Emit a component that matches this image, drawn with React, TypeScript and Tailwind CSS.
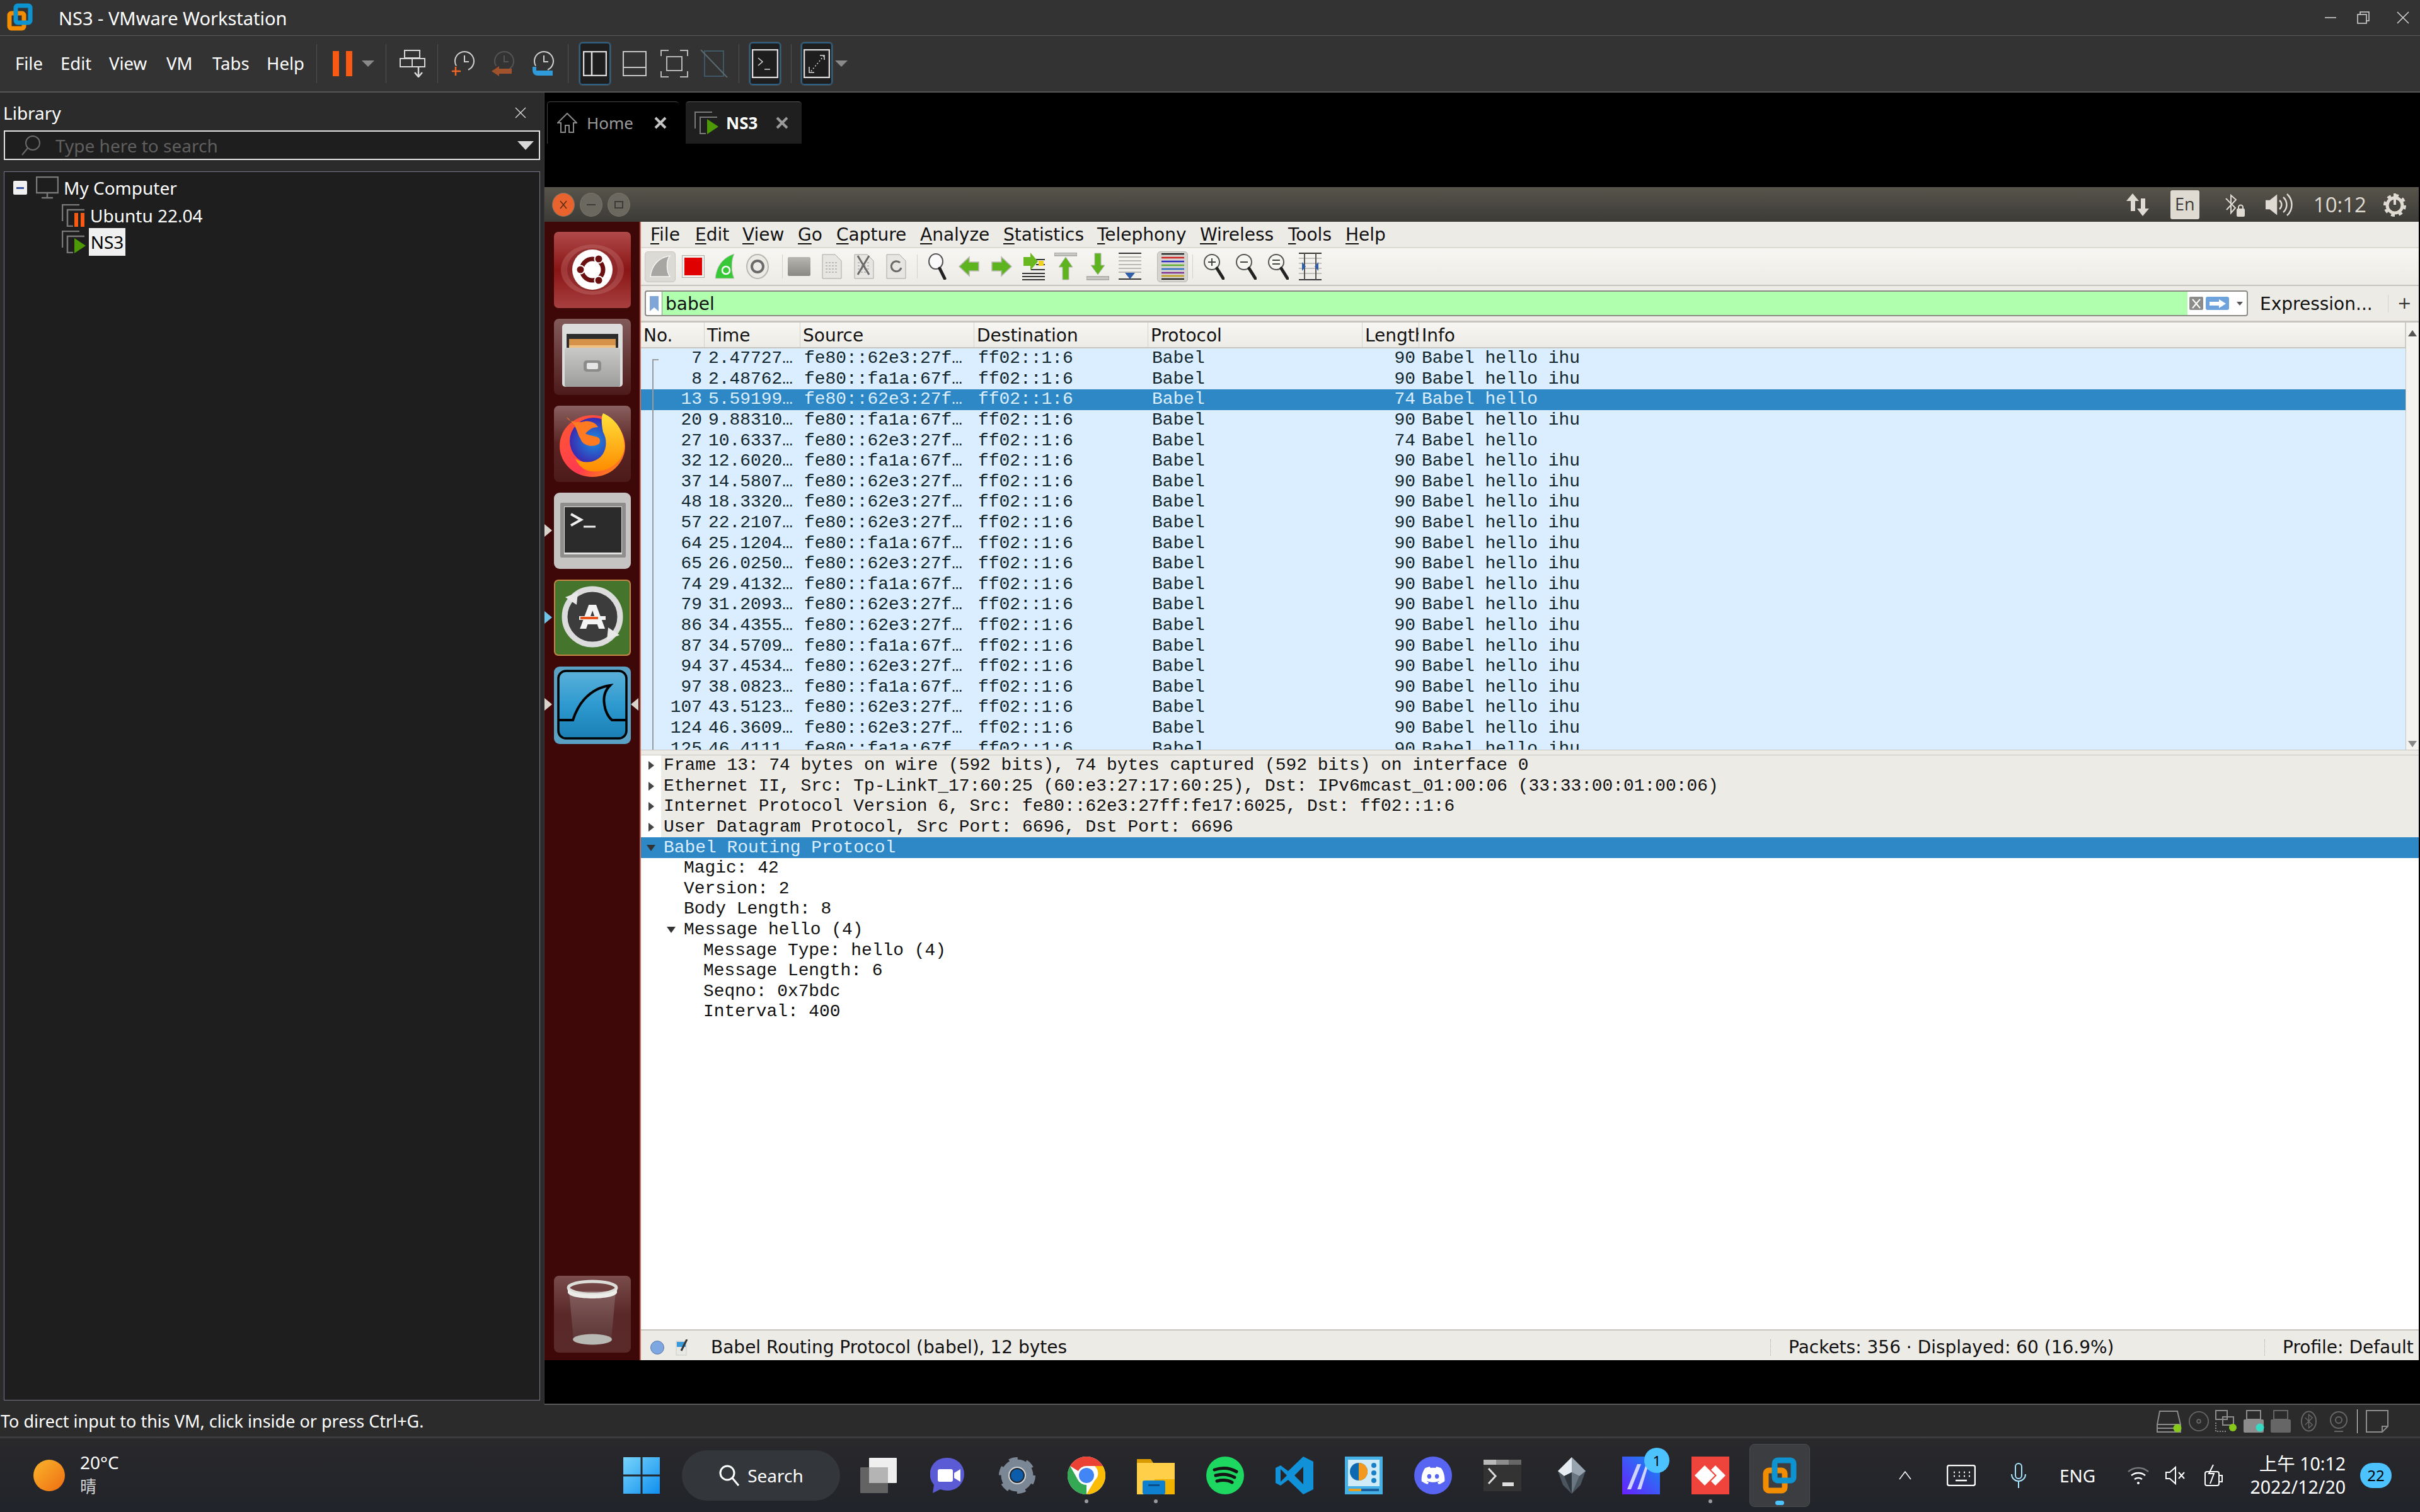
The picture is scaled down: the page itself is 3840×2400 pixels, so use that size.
import React from "react";
import { FaDiscord } from "react-icons/fa";

const G = "#8c8c8c";

function VMwareLogo({ s = 60 }: { s?: number }) {
  return (
    <svg width={s} height={s} viewBox="0 0 60 60" fill="none">
      <rect x="8" y="22" width="30" height="32" rx="5" stroke="#f28c00" strokeWidth="9" />
      <rect x="22" y="6" width="30" height="32" rx="5" stroke="#0d93cf" strokeWidth="9" />
    </svg>
  );
}

function Clock({ badge }: { badge: "plus" | "back" | "wrench" }) {
  return (
    <svg width="46" height="42" viewBox="0 0 46 42" fill="none">
      <circle cx="22" cy="17" r="15" stroke={badge === "back" ? "#555" : "#d0d0d0"} strokeWidth="2" strokeDasharray={badge === "back" ? "70 30" : "72 24"} transform="rotate(150 22 17)" />
      <path d="M22 8v10h7" stroke={badge === "back" ? "#555" : "#d0d0d0"} strokeWidth="2" />
      {badge === "plus" && <path d="M8 26v14M2 33h14" stroke="#f26522" strokeWidth="2.5" />}
      {badge === "back" && <path d="M2 33l12-8v4h20v8H14v4z" fill="#a0522d" />}
      {badge === "wrench" && <path d="M4 26h6v6h26v8H12a8 8 0 0 1-8-8z" fill="#2f9bdb" />}
    </svg>
  );
}

function ActiveBtn({ children }: { children: React.ReactNode }) {
  return (
    <div className="w-[50px] h-[68px] rounded-[5px] bg-[#1e1e1e] border-2 border-[#2a6189] outline outline-1 outline-[#4a4a4a] flex items-center justify-center">
      {children}
    </div>
  );
}

function Sep({ cls = "" }: { cls?: string }) {
  return <div className={`w-px h-[62px] bg-[#505050] shrink-0 ${cls}`} />;
}

function Caret({ cls = "" }: { cls?: string }) {
  return (
    <svg className={`shrink-0 ${cls}`} width="20" height="10" viewBox="0 0 20 10">
      <path d="M0 0h20L10 10z" fill="#8a8a8a" />
    </svg>
  );
}

function TitleBar() {
  return (
    <div className="h-[57px] shrink-0 flex items-center border-b border-[#5a5a5a] bg-[#333333] text-white">
      <div className="ml-[10px] mt-[-2px]">
        <svg width="44" height="44" viewBox="0 0 44 44" fill="none">
          <rect x="5" y="16" width="23" height="24" rx="3" stroke="#f28c00" strokeWidth="7" />
          <rect x="15" y="4" width="23" height="27" rx="3" stroke="#0d93cf" strokeWidth="7" />
        </svg>
      </div>
      <div className="ml-[39px] text-[29px] pt-[2px] font-['Noto_Sans',sans-serif]">NS3 - VMware Workstation</div>
      <div className="ml-auto flex items-center">
        <svg width="24" height="24" viewBox="0 0 24 24" className="mr-[27px]"><path d="M2 12h18" stroke="#d8d8d8" strokeWidth="1.5" /></svg>
        <svg width="24" height="24" viewBox="0 0 24 24" fill="none" stroke="#d8d8d8" strokeWidth="1.5" className="mr-[39px]"><rect x="3" y="7" width="14" height="14" /><path d="M7 7V3h14v14h-4" /></svg>
        <svg width="24" height="24" viewBox="0 0 24 24" stroke="#d8d8d8" strokeWidth="1.5" className="mr-[15px]"><path d="M3 3l18 18M21 3L3 21" /></svg>
      </div>
    </div>
  );
}

function VMToolbar() {
  return (
    <div className="h-[90px] shrink-0 flex items-center bg-[#333333] border-b-2 border-[#555555] text-white font-['Noto_Sans',sans-serif]">
      <div className="w-[502px] shrink-0 flex items-center text-[27.5px] pl-[24px]">
        <span className="w-[72px]">File</span>
        <span className="w-[77px]">Edit</span>
        <span className="w-[91px]">View</span>
        <span className="w-[73px]">VM</span>
        <span className="w-[86px]">Tabs</span>
        <span>Help</span>
      </div>
      <Sep />
      <div className="ml-[25px] flex gap-[11px]">
        <div className="w-[10px] h-[40px] bg-[#f95a13]" />
        <div className="w-[10px] h-[40px] bg-[#f95a13]" />
      </div>
      <Caret cls="ml-[15px]" />
      <Sep cls="ml-[18px]" />
      <svg className="ml-[21px]" width="42" height="44" viewBox="0 0 42 44" fill="none" stroke="#d8d8d8" strokeWidth="2">
        <rect x="8" y="1" width="24" height="12" />
        <rect x="1" y="14" width="19" height="13" />
        <rect x="20" y="14" width="20" height="13" />
        <path d="M30 27v15M24 36l6 7 6-7" strokeWidth="2.5" />
      </svg>
      <Sep cls="ml-[18px]" />
      <div className="ml-[20px]"><Clock badge="plus" /></div>
      <div className="ml-[17px]"><Clock badge="back" /></div>
      <div className="ml-[17px]"><Clock badge="wrench" /></div>
      <Sep cls="ml-[14px]" />
      <div className="ml-[17px]">
        <ActiveBtn>
          <svg width="38" height="40" viewBox="0 0 38 40" fill="none" stroke="#dcdcdc" strokeWidth="2.5"><rect x="1" y="1" width="36" height="38" /><path d="M14 1v38" /></svg>
        </ActiveBtn>
      </div>
      <svg className="ml-[19px]" width="38" height="40" viewBox="0 0 38 40" fill="none" stroke="#c8c8c8" strokeWidth="2"><rect x="1" y="1" width="36" height="38" /><path d="M1 26h36" /></svg>
      <svg className="ml-[22px]" width="44" height="44" viewBox="0 0 44 44" fill="none" stroke="#b8b8b8" strokeWidth="2"><path d="M1 10V1h12M31 1h12v9M43 34v9H31M13 43H1v-9" /><rect x="10" y="11" width="24" height="22" /></svg>
      <svg className="ml-[18px]" width="46" height="44" viewBox="0 0 46 44" fill="none" strokeWidth="2"><path d="M8 2h30v40H8z" stroke="#3f5866" /><path d="M2 0l42 44" stroke="#5a6a72" /></svg>
      <Sep cls="ml-[16px]" />
      <div className="ml-[16px]">
        <ActiveBtn>
          <svg width="42" height="46" viewBox="0 0 42 46" fill="none" stroke="#dcdcdc" strokeWidth="2.5"><rect x="1" y="1" width="40" height="44" /><path d="M10 14l7 6-7 6" strokeWidth="1.5" /><path d="M20 32h9" strokeWidth="1.5" /></svg>
        </ActiveBtn>
      </div>
      <Sep cls="ml-[16px]" />
      <div className="ml-[15px]">
        <ActiveBtn>
          <svg width="42" height="46" viewBox="0 0 42 46" fill="none" stroke="#dcdcdc" strokeWidth="2.5"><rect x="1" y="1" width="40" height="44" /><path d="M12 35l20-24" strokeWidth="1.5" strokeDasharray="2 3" /><path d="M26 10h7v7M9 28v9h8" strokeWidth="1.5" /></svg>
        </ActiveBtn>
      </div>
      <Caret cls="ml-[4px]" />
    </div>
  );
}

function Library() {
  return (
    <div className="w-[864px] shrink-0 flex flex-col bg-[#2b2b2b] text-white font-['Noto_Sans',sans-serif] border-r border-[#3a3a3a]">
      <div className="h-[60px] shrink-0 flex items-center pl-[5px] pr-[28px] justify-between text-[28px] pt-[3px]">
        <span>Library</span>
        <svg width="18" height="18" viewBox="0 0 18 18" stroke="#e0e0e0" strokeWidth="1.3"><path d="M1 1l16 16M17 1L1 17" /></svg>
      </div>
      <div className="h-[47px] shrink-0 mx-[6px] border-2 border-[#e4e4e4] bg-[#1e1e1e] flex items-center pl-[24px] pr-[8px] text-[28px] text-[#5f5f5f]">
        <svg width="34" height="34" viewBox="0 0 34 34" fill="none" stroke="#6a6a6a" strokeWidth="2"><circle cx="20" cy="13" r="11" /><path d="M12 21L3 32" /></svg>
        <span className="ml-[22px]">Type here to search</span>
        <svg className="ml-auto" width="26" height="14" viewBox="0 0 26 14"><path d="M0 0h26L13 14z" fill="#d8d8d8" /></svg>
      </div>
      <div className="h-[18px] shrink-0" />
      <div className="flex-1 mx-[6px] mb-[7px] border border-[#77778a] bg-[#1e1e1e] pt-[6px] text-[28px]">
        <div className="h-[38px] flex items-center">
          <div className="ml-[14px] w-[22px] h-[22px] bg-[#f0f0f0] flex items-center justify-center rounded-[2px]">
            <div className="w-[12px] h-[3px] bg-[#3a55a8]" />
          </div>
          <svg className="ml-[14px]" width="36" height="36" viewBox="0 0 36 36" fill="none" stroke="#7a7a7a" strokeWidth="2.5"><rect x="1" y="1" width="34" height="25" /><path d="M18 26v7M9 34h18" /></svg>
          <span className="ml-[8px]">My Computer</span>
        </div>
        <div className="h-[40px] mt-[5px] flex items-center">
          <svg className="ml-[91px]" width="38" height="36" viewBox="0 0 38 36" fill="none"><path d="M28 1H1v26" stroke="#7a7a7a" strokeWidth="2.5" /><path d="M36 9H9v26h9" stroke="#7a7a7a" strokeWidth="2.5" /><rect x="20" y="14" width="6" height="22" fill="#f95a13" /><rect x="30" y="14" width="6" height="22" fill="#f95a13" /></svg>
          <span className="ml-[7px]">Ubuntu 22.04</span>
        </div>
        <div className="h-[44px] flex items-center">
          <svg className="ml-[91px]" width="38" height="36" viewBox="0 0 38 36" fill="none"><path d="M28 1H1v26" stroke="#7a7a7a" strokeWidth="2.5" /><path d="M36 9H9v26h9" stroke="#7a7a7a" strokeWidth="2.5" /><path d="M20 12l18 12-18 12z" fill="#4e9a06" /></svg>
          <span className="ml-[5px] h-[44px] w-[58px] bg-[#f0f0f0] text-black flex items-center justify-center">NS3</span>
        </div>
      </div>
    </div>
  );
}

function Tabs() {
  return (
    <div className="h-[150px] shrink-0 bg-black pt-[14px] pl-[4px] flex gap-[11px] items-start font-['Noto_Sans',sans-serif]">
      <div className="w-[209px] h-[67px] rounded-t-[5px] border-t border-l border-[#444] flex items-center pl-[15px] bg-black text-[#9a9a9a] text-[26px]">
        <svg width="32" height="32" viewBox="0 0 32 32" fill="none" stroke="#8a8a8a" strokeWidth="2"><path d="M1 16L16 1l15 15h-5v15H19V20h-6v11H6V16z" /></svg>
        <span className="ml-[15px]">Home</span>
        <svg className="ml-[33px]" width="20" height="20" viewBox="0 0 20 20" stroke="#c4c4c4" strokeWidth="4"><path d="M2 2l16 16M18 2L2 18" /></svg>
      </div>
      <div className="w-[184px] h-[67px] rounded-t-[5px] border-t border-[#555] bg-[#1f1f1f] flex items-center pl-[14px] text-white text-[26px] font-bold">
        <svg width="38" height="36" viewBox="0 0 38 36" fill="none"><path d="M28 1H1v26" stroke="#7a7a7a" strokeWidth="2" /><path d="M36 9H9v26h9" stroke="#7a7a7a" strokeWidth="2" /><path d="M20 12l18 12-18 12z" fill="#4e9a06" /></svg>
        <span className="ml-[12px]">NS3</span>
        <svg className="ml-[29px]" width="20" height="20" viewBox="0 0 20 20" stroke="#9a9a9a" strokeWidth="4"><path d="M2 2l16 16M18 2L2 18" /></svg>
      </div>
    </div>
  );
}

function UbuntuPanel() {
  return (
    <div className="h-[55px] shrink-0 flex items-center bg-gradient-to-b from-[#57544b] to-[#3c3b37] text-[#dfdbd2] font-['Open_Sans',sans-serif]">
      <div className="ml-[12px] flex gap-[8px]">
        <div className="w-[36px] h-[38px] rounded-[50%] bg-[#e9632e] border border-[#7a7468] flex items-center justify-center">
          <svg width="12" height="14" viewBox="0 0 12 14" stroke="#5a2a10" strokeWidth="1.5"><path d="M1 1l10 12M11 1L1 13" /></svg>
        </div>
        <div className="w-[36px] h-[38px] rounded-[50%] bg-[#6b685f] border border-[#7a7468] flex items-center justify-center"><div className="w-[14px] h-[2px] bg-[#3c3b37]" /></div>
        <div className="w-[36px] h-[38px] rounded-[50%] bg-[#6b685f] border border-[#7a7468] flex items-center justify-center"><div className="w-[14px] h-[12px] border-2 border-[#3c3b37]" /></div>
      </div>
      <div className="ml-auto flex items-center">
        <svg width="38" height="36" viewBox="0 0 38 36" fill="#dfdbd2"><path d="M11 0l10 12h-6v16H8V12H1z" /><path d="M27 36L18 24h6V8h7v16h6z" /></svg>
        <div className="ml-[33px] w-[46px] h-[46px] rounded-[3px] bg-[#dfdbd2] text-[#3c3b37] flex items-center justify-center text-[27px]">En</div>
        <svg className="ml-[40px]" width="32" height="40" viewBox="0 0 32 40" fill="none" stroke="#dfdbd2" strokeWidth="2"><path d="M2 10l15 15-7 8V5l8 7L3 28" /><rect x="20" y="27" width="11" height="11" fill="#dfdbd2" rx="1" /><path d="M22 27v-3a3 3 0 0 1 7 0v3" /></svg>
        <svg className="ml-[33px]" width="46" height="38" viewBox="0 0 46 38" fill="none" stroke="#dfdbd2" strokeWidth="2.5"><path d="M1 13h6l10-8v28L7 25H1z" fill="#dfdbd2" /><path d="M22 12a9 9 0 0 1 0 14M28 7a16 16 0 0 1 0 24M34 2a23 23 0 0 1 0 34" /></svg>
        <span className="ml-[30px] text-[33px]">10:12</span>
        <svg className="ml-[25px] mr-[18px]" width="40" height="40" viewBox="0 0 40 40" fill="none" stroke="#dfdbd2"><circle cx="20" cy="21" r="12" strokeWidth="5" /><circle cx="20" cy="21" r="16" strokeWidth="4" strokeDasharray="6 6.5" /><path d="M20 2v18" strokeWidth="4" /></svg>
      </div>
    </div>
  );
}

function Dock({ children, pipL, pipR, cls = "" }: { children: React.ReactNode; pipL?: string; pipR?: boolean; cls?: string }) {
  return (
    <div className={`relative w-full h-[121px] flex justify-center shrink-0 ${cls}`}>
      {children}
      {pipL && <div className={`absolute left-0 top-[50px] w-0 h-0 border-y-[10px] border-y-transparent border-l-[12px] ${pipL}`} />}
      {pipR && <div className="absolute right-[2px] top-[50px] w-0 h-0 border-y-[10px] border-y-transparent border-r-[12px] border-r-[#d8d4cc]" />}
    </div>
  );
}

function UbuntuDock() {
  return (
    <svg width="122" height="121" viewBox="0 0 122 121">
      <defs>
        <linearGradient id="dr" x1="0" y1="0" x2="0" y2="1"><stop offset="0" stopColor="#b04a4a" /><stop offset="0.5" stopColor="#8a1515" /><stop offset="1" stopColor="#a84040" /></linearGradient>
      </defs>
      <rect width="122" height="121" rx="7" fill="url(#dr)" />
      <ellipse cx="61" cy="60" rx="50" ry="40" fill="#c87a7a" opacity=".35" />
      <ellipse cx="61" cy="60" rx="40" ry="34" fill="#7c1414" opacity=".5" />
      <circle cx="61" cy="60" r="32" fill="#fff" />
      <circle cx="61" cy="60" r="17" fill="none" stroke="#6a1010" strokeWidth="7" />
      <circle cx="42" cy="60" r="6.5" fill="#6a1010" stroke="#fff" strokeWidth="2" />
      <circle cx="71" cy="43" r="6.5" fill="#6a1010" stroke="#fff" strokeWidth="2" />
      <circle cx="71" cy="77" r="6.5" fill="#6a1010" stroke="#fff" strokeWidth="2" />
    </svg>
  );
}

function FilesDock() {
  return (
    <svg width="122" height="121" viewBox="0 0 122 121">
      <defs>
        <linearGradient id="fb" x1="0" y1="0" x2="0" y2="1"><stop offset="0" stopColor="#825a5a" /><stop offset="1" stopColor="#4d1a1a" /></linearGradient>
        <linearGradient id="fc" x1="0" y1="0" x2="0" y2="1"><stop offset="0" stopColor="#c9c9c7" /><stop offset="1" stopColor="#9d9d9b" /></linearGradient>
      </defs>
      <rect width="122" height="121" rx="8" fill="url(#fb)" />
      <rect x="13" y="8" width="96" height="100" rx="5" fill="#dcdcdc" />
      <rect x="20" y="24" width="82" height="26" fill="#2d2d2d" />
      <rect x="24" y="32" width="74" height="16" fill="#d7924a" />
      <rect x="24" y="42" width="74" height="4" fill="#f0c080" />
      <rect x="17" y="46" width="88" height="62" rx="3" fill="url(#fc)" />
      <rect x="47" y="66" width="28" height="18" rx="5" fill="#8c8c8a" />
      <rect x="52" y="70" width="18" height="10" rx="2" fill="#e6e6e6" />
    </svg>
  );
}

function FirefoxDock() {
  return (
    <svg width="122" height="121" viewBox="0 0 122 121">
      <defs>
        <linearGradient id="fxb" x1="0" y1="0" x2="0" y2="1"><stop offset="0" stopColor="#8a6060" /><stop offset="0.5" stopColor="#5a2424" /><stop offset="1" stopColor="#4d1a1a" /></linearGradient>
        <linearGradient id="fxo" x1="0" y1="0" x2="1" y2="1"><stop offset="0" stopColor="#ff5a30" /><stop offset="0.6" stopColor="#ff3a50" /><stop offset="1" stopColor="#ffa000" /></linearGradient>
        <linearGradient id="fxy" x1="0" y1="0" x2="0" y2="1"><stop offset="0" stopColor="#ffe13a" /><stop offset="1" stopColor="#ff8a00" /></linearGradient>
        <radialGradient id="fxg"><stop offset="0" stopColor="#1a8fe0" /><stop offset="1" stopColor="#3a2ab0" /></radialGradient>
      </defs>
      <rect width="122" height="121" rx="8" fill="url(#fxb)" />
      <ellipse cx="61" cy="64" rx="52" ry="49" fill="url(#fxo)" />
      <ellipse cx="63" cy="56" rx="38" ry="37" fill="url(#fxg)" />
      <path d="M20 18c4 8 14 8 24 8 10-4 22 0 26 8-10 0-14 4-20 10 8 6 28 2 22 16-6 6-26 6-30-8-6-8-4-20-22-34z" fill="#ff7a20" />
      <path d="M34 84c14 10 36 6 44-8 6-10 6-24 0-34-2-10-4-24 0-30 20 8 34 30 34 52 0 22-24 44-54 40-12-2-20-10-24-20z" fill="url(#fxy)" />
    </svg>
  );
}

function TermDock() {
  return (
    <svg width="122" height="121" viewBox="0 0 122 121">
      <rect width="122" height="121" rx="9" fill="#c6c4c3" />
      <rect x="10" y="16" width="104" height="87" rx="2" fill="#8f8e8c" />
      <rect x="16" y="22" width="92" height="76" fill="#e0e0de" />
      <rect x="17" y="23" width="90" height="72" fill="#2b2b2b" />
      <path d="M27 34l16 9-16 9" fill="none" stroke="#f0f0f0" strokeWidth="4" />
      <path d="M47 54h19" stroke="#f0f0f0" strokeWidth="3" />
    </svg>
  );
}

function UpdateDock() {
  return (
    <svg width="122" height="121" viewBox="0 0 122 121">
      <rect x="1" y="1" width="120" height="119" rx="6" fill="#45752d" stroke="#c78645" strokeWidth="2" />
      <circle cx="61" cy="59" r="44" fill="#3c3c3c" stroke="#dcdcdc" strokeWidth="9" />
      <path d="M18 28l20-8-2 20z" fill="#e8e8e8" />
      <path d="M104 88l-20 8 2-20z" fill="#e8e8e8" />
      <text x="61" y="78" textAnchor="middle" fontSize="52" fontFamily="DejaVu Sans" fontWeight="700" fill="#f4f4f4">A</text>
      <rect x="40" y="58" width="42" height="6" fill="#f4f4f4" />
      <rect x="42" y="59" width="28" height="4" fill="#e8551c" />
    </svg>
  );
}

function SharkDock() {
  return (
    <svg width="122" height="123" viewBox="0 0 122 123">
      <defs>
        <linearGradient id="sk" x1="0" y1="0" x2="0" y2="1"><stop offset="0" stopColor="#5bb0d8" /><stop offset="0.5" stopColor="#2e9ad0" /><stop offset="1" stopColor="#1a7fb3" /></linearGradient>
      </defs>
      <rect width="122" height="123" rx="9" fill="#5a9fc4" />
      <rect x="7" y="7" width="108" height="107" rx="12" fill="url(#sk)" stroke="#000" strokeWidth="3.5" />
      <path d="M8 85h22c4-12 10-24 18-33 11-12 26-20 41-22-8 8-11 18-9 30 1 10 6 20 12 25h22" fill="none" stroke="#000" strokeWidth="4" />
    </svg>
  );
}

function TrashDock() {
  return (
    <svg width="122" height="122" viewBox="0 0 122 122">
      <defs>
        <linearGradient id="tb" x1="0" y1="0" x2="0" y2="1"><stop offset="0" stopColor="#7a4c4c" /><stop offset="0.5" stopColor="#5a2828" /><stop offset="1" stopColor="#5a2a2a" /></linearGradient>
        <linearGradient id="tg" x1="0" y1="0" x2="0" y2="1"><stop offset="0" stopColor="#8a6666" /><stop offset="1" stopColor="#5e3a3a" /></linearGradient>
      </defs>
      <rect width="122" height="122" rx="8" fill="url(#tb)" />
      <path d="M24 24h74l-7 78H31z" fill="url(#tg)" opacity=".8" />
      <ellipse cx="61" cy="101" rx="31" ry="8.5" fill="#b8b8b4" />
      <ellipse cx="61" cy="19" rx="38" ry="10" fill="none" stroke="#dcdcd8" strokeWidth="5" />
      <path d="M22 19c2 14 76 14 78 0v8c-4 12-74 12-78 0z" fill="#ecece8" />
    </svg>
  );
}

function DockColumn() {
  return (
    <div className="w-[153px] shrink-0 bg-[#3f0808] border-r-2 border-[#c46a5a] flex flex-col pt-[16px] gap-[17px] pb-[13px] items-center">
      <Dock><UbuntuDock /></Dock>
      <Dock><FilesDock /></Dock>
      <Dock><FirefoxDock /></Dock>
      <Dock pipL="border-l-[#d8d4cc]"><TermDock /></Dock>
      <Dock pipL="border-l-[#70c4e8]"><UpdateDock /></Dock>
      <Dock pipL="border-l-[#d8d4cc]" pipR><SharkDock /></Dock>
      <Dock cls="mt-auto"><TrashDock /></Dock>
    </div>
  );
}

function WsMenu() {
  const items: [string, string, string][] = [
    ["F", "ile", "w-[71px]"],
    ["E", "dit", "w-[75px]"],
    ["V", "iew", "w-[88px]"],
    ["G", "o", "w-[61px]"],
    ["C", "apture", "w-[133px]"],
    ["A", "nalyze", "w-[132px]"],
    ["S", "tatistics", "w-[149px]"],
    ["T", "elephony", "w-[163px]"],
    ["W", "ireless", "w-[140px]"],
    ["T", "ools", "w-[91px]"],
    ["H", "elp", "w-[80px]"],
  ];
  return (
    <div className="h-[42px] shrink-0 flex items-center bg-[#edebe6] pl-[15px] pt-[1px] border-b-2 border-[#dcd9d2] text-[28px] text-[#111]">
      {items.map(([a, b, w], i) => (
        <span key={i} className={`${w} shrink-0`}><span className="underline underline-offset-[4px] decoration-[2px]">{a}</span>{b}</span>
      ))}
    </div>
  );
}

function Doc({ x }: { x?: boolean }) {
  return (
    <svg width="32" height="40" viewBox="0 0 32 40" fill="none">
      <path d="M1 1h20l10 10v28H1z" fill="#e8e6e2" stroke="#a8a6a2" />
      <path d="M6 14h20M6 19h20M6 24h20M6 29h20" stroke="#bbb" strokeWidth="2" strokeDasharray="3 2" />
      {x && <path d="M6 3l18 30M24 3L6 33" stroke="#6a6a6a" strokeWidth="3" />}
    </svg>
  );
}

function Arrow({ d }: { d: number }) {
  return (
    <svg width="36" height="34" viewBox="0 0 36 34" style={{ transform: `rotate(${d}deg)` }}>
      <path d="M2 17L18 2v8h15v14H18v8z" fill="#5db41e" stroke="#b8b6b0" strokeWidth="1.5" />
    </svg>
  );
}

function Mag({ sign }: { sign?: string }) {
  return (
    <svg width="34" height="42" viewBox="0 0 34 42" fill="none">
      <circle cx="14" cy="14" r="12" stroke="#555" strokeWidth="2" fill="#f5f5f2" />
      <path d="M22 24l10 16" stroke="#222" strokeWidth="5" strokeLinecap="round" />
      {sign === "+" && <path d="M8 14h12M14 8v12" stroke="#444" strokeWidth="2" />}
      {sign === "-" && <path d="M8 14h12" stroke="#444" strokeWidth="2" />}
      {sign === "=" && <path d="M8 11h12M8 17h12" stroke="#444" strokeWidth="2" />}
    </svg>
  );
}

function Slot({ children, cls = "w-[51px]" }: { children: React.ReactNode; cls?: string }) {
  return <div className={`${cls} h-full shrink-0 flex items-center justify-center`}>{children}</div>;
}

function WsSep() {
  return <div className="w-px h-[38px] bg-[#d5d2cc] shrink-0" />;
}

function WsToolbar() {
  return (
    <div className="h-[60px] shrink-0 flex items-center pl-[6px] bg-gradient-to-b from-[#f8f6f2] to-[#edebe6] border-b-2 border-[#c8c5bf]">
      <div className="w-[49px] h-[49px] rounded-[5px] bg-[#dcdad5] border border-[#c8c5bf] flex items-center justify-center mr-[2px]">
        <svg width="34" height="36" viewBox="0 0 34 36"><path d="M1 34C3 16 14 4 32 1c-6 8-6 24 0 33z" fill="#a8a6a2" stroke="#f4f4f4" strokeWidth="1.5" /></svg>
      </div>
      <Slot><div className="w-[34px] h-[34px] bg-[#e00000] border-[3px] border-[#f0eeea] outline outline-1 outline-[#b0aea8]" /></Slot>
      <Slot>
        <svg width="36" height="42" viewBox="0 0 36 42"><path d="M2 40C4 20 14 7 32 1c-5 10-5 29 0 39z" fill="#37c837" stroke="#c8c8c0" /><circle cx="19" cy="27" r="6" fill="none" stroke="#fff" strokeWidth="2.5" /></svg>
      </Slot>
      <Slot>
        <svg width="38" height="42" viewBox="0 0 38 42"><ellipse cx="19" cy="21" rx="17" ry="19" fill="#eceae5" stroke="#b8b6b0" strokeWidth="2" /><circle cx="19" cy="21" r="9" fill="none" stroke="#6a6a6a" strokeWidth="4" /></svg>
      </Slot>
      <div className="w-[14px]" /><WsSep /><div className="w-[8px]" />
      <div className="w-[36px] h-[30px] bg-gradient-to-b from-[#b8b6b0] to-[#8a8884] rounded-[2px] shrink-0" />
      <div className="w-[8px]" />
      <Slot><Doc /></Slot>
      <Slot><Doc x /></Slot>
      <Slot>
        <svg width="32" height="40" viewBox="0 0 32 40" fill="none"><path d="M1 1h20l10 10v28H1z" fill="#e8e6e2" stroke="#a8a6a2" /><path d="M22 14a8 8 0 1 0 2 8" stroke="#6a6a6a" strokeWidth="3" /></svg>
      </Slot>
      <div className="w-[8px]" /><WsSep /><div className="w-[15px]" />
      <svg width="34" height="42" viewBox="0 0 34 42" fill="none" className="shrink-0"><ellipse cx="14" cy="13" rx="11" ry="12" stroke="#555" strokeWidth="2" fill="#fafafa" /><path d="M20 24l8 16" stroke="#222" strokeWidth="5" strokeLinecap="round" /></svg>
      <div className="w-[7px]" />
      <Slot><Arrow d={0} /></Slot>
      <Slot><Arrow d={180} /></Slot>
      <Slot>
        <svg width="36" height="46" viewBox="0 0 36 46" fill="none">
          <path d="M14 12h22M22 20h14M14 28h22M0 34h36M0 39h36M0 44h36" stroke="#333" strokeWidth="2" />
          <path d="M2 8h11V1l12 14-12 14v-7H2z" fill="#6ab820" />
          <rect x="26" y="14" width="8" height="8" fill="#f0d020" />
        </svg>
      </Slot>
      <Slot>
        <svg width="36" height="44" viewBox="0 0 36 44"><rect y="0" width="36" height="5" fill="#c8c8c4" stroke="#888" /><path d="M18 7l11 16h-6v20H13V23H7z" fill="#5db41e" stroke="#b8b6b0" /></svg>
      </Slot>
      <Slot>
        <svg width="36" height="44" viewBox="0 0 36 44"><rect y="38" width="36" height="5" fill="#c8c8c4" stroke="#888" /><path d="M18 35L7 20h6V1h10v19h6z" fill="#5db41e" stroke="#b8b6b0" /></svg>
      </Slot>
      <Slot>
        <svg width="36" height="44" viewBox="0 0 36 44" fill="none">
          <path d="M0 1h36" stroke="#333" strokeWidth="2" /><path d="M0 7h36M0 13h36M0 19h36M0 25h36M0 31h36" stroke="#b8b8b4" strokeWidth="2" />
          <path d="M0 42h36" stroke="#333" strokeWidth="2" /><path d="M10 32h16l-8 10z" fill="#2f5fa8" />
        </svg>
      </Slot>
      <div className="w-[18px]" />
      <div className="w-[49px] h-[49px] rounded-[5px] bg-[#d6d4cf] border border-[#bab8b2] flex items-center justify-center shrink-0">
        <svg width="36" height="42" viewBox="0 0 36 42" fill="none">
          <path d="M0 1h36" stroke="#222" strokeWidth="2.5" /><path d="M0 7h36" stroke="#d02020" strokeWidth="2.5" /><path d="M0 13h36" stroke="#3030c0" strokeWidth="2.5" />
          <path d="M0 19h36" stroke="#60b030" strokeWidth="2.5" /><path d="M0 25h36" stroke="#3070c0" strokeWidth="2.5" /><path d="M0 31h36" stroke="#803090" strokeWidth="2.5" />
          <path d="M0 36h36" stroke="#c0a020" strokeWidth="2.5" /><path d="M0 41h36" stroke="#222" strokeWidth="2.5" />
        </svg>
      </div>
      <div className="w-[7px]" /><WsSep /><div className="w-[7px]" />
      <Slot><Mag sign="+" /></Slot>
      <Slot><Mag sign="-" /></Slot>
      <Slot><Mag sign="=" /></Slot>
      <Slot>
        <svg width="36" height="44" viewBox="0 0 36 44" fill="none">
          <path d="M0 1h36M0 43h36" stroke="#333" strokeWidth="2" /><path d="M0 9h36M0 17h36M0 25h36M0 33h36" stroke="#c0c0bc" strokeWidth="2" />
          <path d="M9 1v42M27 1v42" stroke="#555" strokeWidth="2" /><path d="M5 15l6 7-6 7zM31 15l-6 7 6 7z" fill="#2f5fa8" />
        </svg>
      </Slot>
    </div>
  );
}

function WsFilter() {
  return (
    <div className="h-[58px] shrink-0 flex items-center bg-[#edebe6] pl-[6px] border-b-[3px] border-[#c8c5bf]">
      <div className="h-[41px] w-[2544px] shrink-0 flex rounded-[4px] border-2 border-[#8c8a85] bg-white overflow-hidden">
        <div className="w-[26px] flex items-center justify-center border-r border-[#8c8a85] shrink-0">
          <svg width="14" height="24" viewBox="0 0 14 24"><path d="M0 0h14v24l-7-6-7 6z" fill="#7ea6d8" /></svg>
        </div>
        <div className="w-[420px] flex-1 bg-[#afffaf] pl-[5px] pt-[2px] flex items-center text-[28px] leading-[34px] text-[#111]">babel</div>
        <div className="w-[94px] shrink-0 flex items-center pl-[3px]">
          <div className="w-[22px] h-[21px] bg-[#8c8c8a] rounded-[2px] flex items-center justify-center">
            <svg width="14" height="16" viewBox="0 0 14 16" stroke="#fff" strokeWidth="2"><path d="M1 1l12 14M13 1L1 15" /></svg>
          </div>
          <div className="ml-[4px] w-[37px] h-[21px] bg-[#6ea2dc] rounded-[3px] flex items-center justify-center">
            <svg width="26" height="14" viewBox="0 0 26 14" fill="#fff"><path d="M0 4h15V0l11 7-11 7v-4H0z" /></svg>
          </div>
          <svg className="ml-[12px]" width="10" height="6" viewBox="0 0 10 6"><path d="M0 0h10L5 6z" fill="#555" /></svg>
        </div>
      </div>
      <span className="ml-[19px] pt-[2px] text-[28px] text-[#111] w-[203px] shrink-0">Expression...</span>
      <div className="w-px h-[28px] bg-[#d5d2cc] shrink-0" />
      <span className="ml-[14px] text-[27px] text-[#333]">+</span>
    </div>
  );
}

const packets: [string, string, string, string, string][] = [
  ["7", "2.47727…", "fe80::62e3:27f…", "90", "Babel hello ihu"],
  ["8", "2.48762…", "fe80::fa1a:67f…", "90", "Babel hello ihu"],
  ["13", "5.59199…", "fe80::62e3:27f…", "74", "Babel hello"],
  ["20", "9.88310…", "fe80::fa1a:67f…", "90", "Babel hello ihu"],
  ["27", "10.6337…", "fe80::62e3:27f…", "74", "Babel hello"],
  ["32", "12.6020…", "fe80::fa1a:67f…", "90", "Babel hello ihu"],
  ["37", "14.5807…", "fe80::62e3:27f…", "90", "Babel hello ihu"],
  ["48", "18.3320…", "fe80::62e3:27f…", "90", "Babel hello ihu"],
  ["57", "22.2107…", "fe80::62e3:27f…", "90", "Babel hello ihu"],
  ["64", "25.1204…", "fe80::fa1a:67f…", "90", "Babel hello ihu"],
  ["65", "26.0250…", "fe80::62e3:27f…", "90", "Babel hello ihu"],
  ["74", "29.4132…", "fe80::fa1a:67f…", "90", "Babel hello ihu"],
  ["79", "31.2093…", "fe80::62e3:27f…", "90", "Babel hello ihu"],
  ["86", "34.4355…", "fe80::62e3:27f…", "90", "Babel hello ihu"],
  ["87", "34.5709…", "fe80::fa1a:67f…", "90", "Babel hello ihu"],
  ["94", "37.4534…", "fe80::62e3:27f…", "90", "Babel hello ihu"],
  ["97", "38.0823…", "fe80::fa1a:67f…", "90", "Babel hello ihu"],
  ["107", "43.5123…", "fe80::62e3:27f…", "90", "Babel hello ihu"],
  ["124", "46.3609…", "fe80::62e3:27f…", "90", "Babel hello ihu"],
  ["125", "46.4111…", "fe80::fa1a:67f…", "90", "Babel hello ihu"],
];

const GRID = "grid grid-cols-[101px_152px_276px_276px_340px_90px_1fr]";

function PacketList() {
  return (
    <div className="h-[678px] shrink-0 flex bg-[#edebe6]">
      <div className="flex-1 flex flex-col min-w-0">
        <div className={`${GRID} h-[41px] shrink-0 border-b-2 border-[#c8c5bf] bg-gradient-to-b from-[#f8f6f2] to-[#edebe6] text-[28px] leading-[34px] text-[#111]`}>
          {["No.", "Time", "Source", "Destination", "Protocol", "Length", "Info"].map((h) => (
            <div key={h} className="h-full pl-[4px] pt-[2px] flex items-center border-r border-[#d5d2cc] overflow-hidden whitespace-nowrap">{h}</div>
          ))}
        </div>
        <div className="relative h-[637px] overflow-hidden bg-[#daeeff] font-['Liberation_Mono',monospace] text-[27.9px]">
          {packets.map((p) => {
            const sel = p[0] === "13";
            return (
              <div key={p[0]} className={`${GRID} h-[32.6px] leading-[32px] items-center whitespace-nowrap ${sel ? "bg-[#2e88c6] text-[#daeeff]" : "text-[#12272e]"}`}>
                <span className="text-right pr-[4px]">{p[0]}</span>
                <span className="pl-[6px]">{p[1]}</span>
                <span className="pl-[6px]">{p[2]}</span>
                <span className="pl-[6px]">ff02::1:6</span>
                <span className="pl-[6px]">Babel</span>
                <span className="text-right pr-[6px]">{p[3]}</span>
                <span className="pl-[4px]">{p[4]}</span>
              </div>
            );
          })}
          <div className="absolute left-[18px] top-[17px] bottom-0 w-[10px] border-l-2 border-t-2 border-[#9a9a9a]" />
        </div>
      </div>
      <div className="w-[21px] shrink-0 bg-[#f5f3ef] border-l border-[#c8c5bf] flex flex-col justify-between items-center pt-[12px] pb-[4px]">
        <svg width="14" height="10" viewBox="0 0 14 10"><path d="M0 10h14L7 0z" fill="#555" /></svg>
        <svg width="14" height="10" viewBox="0 0 14 10"><path d="M0 0h14L7 10z" fill="#888" /></svg>
      </div>
    </div>
  );
}

function Tri({ open }: { open?: boolean }) {
  return open ? (
    <svg width="14" height="10" viewBox="0 0 14 10"><path d="M0 0h14L7 10z" fill="#333" /></svg>
  ) : (
    <svg width="9" height="14" viewBox="0 0 9 14"><path d="M0 0l9 7-9 7z" fill="#444" /></svg>
  );
}

function Details() {
  const closed = [
    "Frame 13: 74 bytes on wire (592 bits), 74 bytes captured (592 bits) on interface 0",
    "Ethernet II, Src: Tp-LinkT_17:60:25 (60:e3:27:17:60:25), Dst: IPv6mcast_01:00:06 (33:33:00:01:00:06)",
    "Internet Protocol Version 6, Src: fe80::62e3:27ff:fe17:6025, Dst: ff02::1:6",
    "User Datagram Protocol, Src Port: 6696, Dst Port: 6696",
  ];
  const row = "h-[32.6px] flex items-center whitespace-nowrap leading-[30px]";
  return (
    <div className="flex-1 bg-white font-['Liberation_Mono',monospace] text-[27.9px] text-[#111] min-h-0 overflow-hidden">
      {closed.map((t) => (
        <div key={t} className={row}>
          <div className="w-[32px] h-full flex items-center justify-center shrink-0"><Tri /></div>
          <div className="flex-1 h-full bg-[#edebe6] pl-[4px] flex items-center">{t}</div>
        </div>
      ))}
      <div className={`${row} bg-[#2e88c6] text-[#daeeff]`}>
        <div className="w-[32px] flex justify-center shrink-0"><Tri open /></div>
        <span className="pl-[4px]">Babel Routing Protocol</span>
      </div>
      {["Magic: 42", "Version: 2", "Body Length: 8"].map((t) => (
        <div key={t} className={`${row} pl-[68px]`}>{t}</div>
      ))}
      <div className={row}>
        <div className="w-[68px] flex justify-end pr-[13px] shrink-0"><Tri open /></div>
        <span>Message hello (4)</span>
      </div>
      {["Message Type: hello (4)", "Message Length: 6", "Seqno: 0x7bdc", "Interval: 400"].map((t) => (
        <div key={t} className={`${row} pl-[99px]`}>{t}</div>
      ))}
    </div>
  );
}

function WsStatus() {
  return (
    <div className="h-[49px] shrink-0 flex items-center bg-[#edebe6] border-t-2 border-[#c8c5bf] text-[28px] text-[#111] pl-[15px] pt-[6px]">
      <div className="w-[22px] h-[22px] rounded-full bg-[#7ea6e0] border border-[#5a7aa8]" />
      <svg className="ml-[18px]" width="22" height="26" viewBox="0 0 22 26"><rect x="1" y="3" width="16" height="22" fill="#e8e8e4" stroke="#ccc" /><path d="M2 4h14v8H2z" fill="#3a9ad8" /><path d="M18 0L9 18" stroke="#333" strokeWidth="3" /></svg>
      <span className="ml-[34px]">Babel Routing Protocol (babel), 12 bytes</span>
      <div className="ml-auto w-px h-[26px] border-l border-dotted border-[#aaa]" />
      <span className="ml-[28px] w-[755px]">Packets: 356 · Displayed: 60 (16.9%)</span>
      <div className="w-px h-[26px] border-l border-dotted border-[#aaa]" />
      <span className="ml-[28px] w-[216px] whitespace-nowrap">Profile: Default</span>
    </div>
  );
}

function Main() {
  return (
    <div className="flex-1 min-w-0 flex flex-col bg-black pr-[2px] border-b-2 border-[#5a5a5a]">
      <Tabs />
      <div className="h-[1862px] shrink-0 flex flex-col">
        <UbuntuPanel />
        <div className="flex-1 flex min-h-0">
          <DockColumn />
          <div className="flex-1 min-w-0 flex flex-col bg-[#edebe6] font-['DejaVu_Sans',sans-serif]">
            <WsMenu />
            <WsToolbar />
            <WsFilter />
            <PacketList />
            <div className="h-[9px] shrink-0 bg-[#edebe6] border-y border-[#c8c5bf]" />
            <Details />
            <WsStatus />
          </div>
        </div>
      </div>
    </div>
  );
}

function VmStatus() {
  return (
    <div className="h-[50px] shrink-0 flex items-center bg-[#2b2b2b] pl-[1px] pt-[2px] text-[27px] text-white font-['Noto_Sans',sans-serif]">
      <span>To direct input to this VM, click inside or press Ctrl+G.</span>
      <div className="ml-auto mr-[50px] flex items-center gap-[9px]">
        <svg width="41" height="35" viewBox="0 0 41 35" fill="none" stroke={G} strokeWidth="2"><path d="M1 34V22L5 1h28l5 21v12zM1 22h36M1 28h26" /><circle cx="33" cy="28" r="6.5" fill="#86c91a" stroke="none" /></svg>
        <svg width="34" height="36" viewBox="0 0 36 36" fill="none" stroke="#666" strokeWidth="2"><circle cx="18" cy="18" r="16" /><circle cx="18" cy="18" r="3" /></svg>
        <svg width="35" height="36" viewBox="0 0 35 36" fill="none" stroke={G} strokeWidth="2"><rect x="1" y="1" width="18" height="14" /><rect x="12" y="11" width="17" height="13" /><path d="M1 20v14h18" strokeDasharray="2 2" /><circle cx="28" cy="28" r="6" fill="#86c91a" stroke="none" /></svg>
        <svg width="34" height="36" viewBox="0 0 34 36" fill="none"><path d="M6 1h22v14H6z" stroke={G} strokeWidth="2" /><rect x="1" y="15" width="32" height="21" fill={G} rx="2" /><circle cx="27" cy="28" r="6.5" fill="#36d9c4" /></svg>
        <svg width="34" height="36" viewBox="0 0 34 36" fill="none"><path d="M6 1h22v14H6z" stroke="#666" strokeWidth="2" /><rect x="1" y="15" width="32" height="21" fill="#666" rx="2" /></svg>
        <svg className="ml-[5px]" width="27" height="36" viewBox="0 0 28 36" fill="none" stroke="#666" strokeWidth="2"><ellipse cx="14" cy="18" rx="12" ry="16" /><path d="M8 12l12 12-6 5V7l6 5L8 24" strokeWidth="1.5" /></svg>
        <svg className="ml-[10px]" width="30" height="36" viewBox="0 0 30 36" fill="none" stroke="#666" strokeWidth="2"><circle cx="15" cy="16" r="13" /><circle cx="15" cy="16" r="5" /><path d="M8 34h14" /></svg>
        <div className="w-px h-[38px] bg-[#e0e0e0] ml-[5px]" />
        <svg className="ml-[4px]" width="36" height="36" viewBox="0 0 36 36" fill="none" stroke={G} strokeWidth="2"><path d="M1 1h34v25l-9 9H1zM35 26h-9v9" /></svg>
      </div>
    </div>
  );
}

function TaskIcon({ children, dot }: { children: React.ReactNode; dot?: boolean }) {
  return (
    <div className="relative w-[110px] h-full flex items-center justify-center shrink-0">
      {children}
      {dot && <div className="absolute bottom-[14px] w-[6px] h-[6px] rounded-full bg-[#9a9a9a]" />}
    </div>
  );
}

function Taskbar() {
  return (
    <div className="flex-1 flex items-center bg-gradient-to-b from-[#29282b] to-[#21242a] border-t-[3px] border-[#3c3c3c] text-white font-['Noto_Sans','Noto_Sans_CJK_TC',sans-serif] text-[28px]">
      <div className="ml-[53px] w-[50px] h-[50px] rounded-full bg-gradient-to-br from-[#f7b52c] to-[#ef6b10] shrink-0" />
      <div className="ml-[24px] w-[120px] shrink-0 leading-[38px] mt-[-4px]">
        <div className="text-[28px]">20°C</div>
        <div className="text-[26px] text-[#d4d4d4]">晴</div>
      </div>
      <svg className="ml-[742px] shrink-0" width="58" height="58" viewBox="0 0 58 58">
        <defs><linearGradient id="w" x1="0" y1="0" x2="1" y2="1"><stop offset="0" stopColor="#78d4fb" /><stop offset="1" stopColor="#0f8fef" /></linearGradient></defs>
        <path d="M0 0h27.5v27.5H0zM30.5 0H58v27.5H30.5zM0 30.5h27.5V58H0zM30.5 30.5H58V58H30.5z" fill="url(#w)" />
      </svg>
      <div className="ml-[35px] w-[251px] h-[80px] rounded-[40px] bg-[#33363a] flex items-center justify-center shrink-0">
        <svg width="34" height="36" viewBox="0 0 34 36" fill="none" stroke="#fff" strokeWidth="3"><circle cx="14" cy="14" r="11" /><path d="M22 22l10 12" /></svg>
        <span className="ml-[12px]">Search</span>
      </div>
      <div className="ml-[6px] flex h-full items-center">
        <TaskIcon>
          <svg width="58" height="56" viewBox="0 0 58 56"><rect x="14" y="0" width="44" height="40" fill="#efefef" rx="1" /><rect x="0" y="15" width="44" height="41" fill="#6a6a6a" fillOpacity=".9" rx="1" /><rect x="14" y="15" width="30" height="25" fill="#b4b4b4" /></svg>
        </TaskIcon>
        <TaskIcon>
          <svg width="56" height="60" viewBox="0 0 56 60"><path d="M28 2a26 26 0 0 1 0 52c-4 0-8-1-12-2l-12 6 2-13A26 26 0 0 1 28 2z" fill="#5b5bd6" /><rect x="12" y="20" width="24" height="20" rx="3" fill="#fff" /><path d="M38 26l10-6v20l-10-6z" fill="#fff" /></svg>
        </TaskIcon>
        <TaskIcon>
          <svg width="60" height="60" viewBox="0 0 60 60" fill="none"><circle cx="30" cy="30" r="19" stroke="#7b8794" strokeWidth="13" /><circle cx="30" cy="30" r="25" stroke="#7b8794" strokeWidth="8" strokeDasharray="13 13.2" /><circle cx="30" cy="30" r="13" stroke="#cfd6dc" strokeWidth="2" /><circle cx="30" cy="30" r="10" fill="#0b5cab" /></svg>
        </TaskIcon>
        <TaskIcon dot>
          <svg width="60" height="60" viewBox="0 0 60 60"><circle cx="30" cy="30" r="30" fill="#fff" /><path d="M30 0a30 30 0 0 1 26 15H30a15 15 0 0 0-13 8L4 15A30 30 0 0 1 30 0z" fill="#ea4335" /><path d="M56 15a30 30 0 0 1-26 45l13-22a15 15 0 0 0 0-23z" fill="#fbbc05" /><path d="M30 60A30 30 0 0 1 4 15l13 23a15 15 0 0 0 13 7z" fill="#34a853" /><circle cx="30" cy="30" r="12" fill="#4285f4" /></svg>
        </TaskIcon>
        <TaskIcon dot>
          <svg width="60" height="60" viewBox="0 0 60 60"><path d="M0 4h22l4 6v8H0z" fill="#d99a00" /><path d="M0 10h60v50H0z" fill="#ffcf4a" /><path d="M28 36h32v24H28z" fill="#f2b300" /><rect x="9" y="38" width="36" height="22" rx="3" fill="#0f7fd0" /><rect x="18" y="44" width="18" height="3" fill="#0a4f8c" /></svg>
        </TaskIcon>
        <TaskIcon>
          <svg width="60" height="60" viewBox="0 0 60 60" fill="none"><circle cx="30" cy="30" r="30" fill="#1ed760" /><path d="M13 21c12-4 25-3 35 3M15 30c10-3 21-2 30 3M17 39c8-2 17-2 24 2" stroke="#141414" strokeWidth="5" strokeLinecap="round" /></svg>
        </TaskIcon>
        <TaskIcon>
          <svg width="60" height="60" viewBox="0 0 60 60"><path d="M44 0l16 8v44l-16 8-24-23-12 9-8-4V18l8-4 12 9zM44 16L30 30l14 14z" fill="#1192d8" /><path d="M8 20l10 10L8 40z" fill="#26262a" /></svg>
        </TaskIcon>
        <TaskIcon>
          <svg width="60" height="60" viewBox="0 0 60 60" fill="none"><rect width="60" height="60" fill="#45b0e6" /><rect x="5" y="5" width="50" height="42" fill="#cfeaf8" /><circle cx="22" cy="24" r="14" fill="#0e6ab0" /><path d="M22 10a14 14 0 0 1 0 28z" fill="#f29a1f" /><circle cx="46" cy="14" r="4" fill="#1a7fc4" /><circle cx="46" cy="26" r="4" fill="#1a7fc4" /><circle cx="46" cy="38" r="4" fill="#1a7fc4" /><rect x="6" y="51" width="48" height="4" fill="#1a5f9c" /><rect x="6" y="51" width="20" height="4" fill="#e8a020" /></svg>
        </TaskIcon>
        <TaskIcon>
          <div className="w-[60px] h-[60px] rounded-full bg-[#5865f2] flex items-center justify-center"><FaDiscord size={40} color="#fff" /></div>
        </TaskIcon>
        <TaskIcon>
          <svg width="60" height="50" viewBox="0 0 60 50"><rect width="60" height="50" fill="#333" /><rect width="20" height="8" fill="#b8b8b8" /><rect x="20" width="20" height="8" fill="#8c8c8c" /><rect x="40" width="20" height="8" fill="#666" /><path d="M8 14l11 12-11 12" fill="none" stroke="#ddd" strokeWidth="3" /><rect x="30" y="36" width="18" height="6" fill="#ddd" /></svg>
        </TaskIcon>
        <TaskIcon>
          <svg width="52" height="58" viewBox="0 0 52 58"><path d="M26 0L48 22L40 44L26 58L12 44L4 22z" fill="#4b5560" /><path d="M26 0L4 22l10 8 12-6z" fill="#e6ecf2" /><path d="M26 0l22 22-10 8-12-6z" fill="#98a4b0" /><path d="M14 30l12 28V24z" fill="#2e353c" /><path d="M38 30L26 58V24z" fill="#6a7682" /></svg>
        </TaskIcon>
        <div className="relative shrink-0 h-full flex items-center">
          <TaskIcon>
            <svg width="60" height="60" viewBox="0 0 60 60"><defs><linearGradient id="pa" x1="0" y1="1" x2="1" y2="0"><stop offset="0" stopColor="#6a1fff" /><stop offset="1" stopColor="#0f8fef" /></linearGradient></defs><rect width="60" height="60" fill="url(#pa)" /><path d="M8 52L24 12h6L14 52zM24 52L38 12h4L30 52z" fill="#cfd4ff" /></svg>
          </TaskIcon>
          <div className="absolute top-[15px] left-[60px] w-[40px] h-[40px] rounded-full bg-[#4cc2ff] text-black text-[22px] flex items-center justify-center">1</div>
        </div>
        <TaskIcon dot>
          <svg width="60" height="60" viewBox="0 0 60 60"><rect width="60" height="60" fill="#ef443b" /><path d="M21 14l16 16-16 16L5 30z" fill="#fff" /><path d="M38 14l16 16-16 16-7-7 9-9-9-9z" fill="#fff" /></svg>
        </TaskIcon>
        <div className="w-[96px] h-[100px] rounded-[8px] bg-[#3b3d40] border border-[#4a4c4f] flex items-center justify-center relative shrink-0 ml-[7px]">
          <VMwareLogo s={60} />
          <div className="absolute bottom-[2px] w-[14px] h-[7px] rounded-full bg-[#4cc2ff]" />
        </div>
      </div>
      <svg className="ml-[141px] shrink-0" width="20" height="14" viewBox="0 0 20 14" fill="none" stroke="#fff" strokeWidth="1.5"><path d="M1 13l9-12 9 12" /></svg>
      <svg className="ml-[56px] shrink-0" width="46" height="34" viewBox="0 0 46 34" fill="none" stroke="#fff" strokeWidth="2.5"><rect x="1" y="1" width="44" height="32" rx="3" /><path d="M11 12h2M19 12h2M27 12h2M35 12h2M11 18h2M19 18h2M27 18h2M35 18h2M14 25h18" /></svg>
      <svg className="ml-[56px] shrink-0" width="24" height="40" viewBox="0 0 24 40" fill="none" stroke="#a8e4ff" strokeWidth="2"><rect x="7" y="1" width="10" height="24" rx="5" /><path d="M1 18a11 11 0 0 0 22 0M12 30v10" /></svg>
      <span className="ml-[53px] w-[60px] shrink-0 text-[28px]">ENG</span>
      <svg className="ml-[48px] shrink-0" width="34" height="30" viewBox="0 0 34 30" fill="none" stroke="#fff" strokeWidth="2.5"><path d="M1 9a24 24 0 0 1 32 0" stroke="#777" /><path d="M6 15a17 17 0 0 1 22 0M11 21a10 10 0 0 1 12 0" /><circle cx="17" cy="27" r="2" fill="#fff" stroke="none" /></svg>
      <svg className="ml-[26px] shrink-0" width="32" height="32" viewBox="0 0 32 32" fill="none" stroke="#fff" strokeWidth="2"><path d="M1 11h6l9-8v26l-9-8H1zM21 11l9 10M30 11l-9 10" /></svg>
      <svg className="ml-[29px] shrink-0" width="32" height="36" viewBox="0 0 32 36" fill="none" stroke="#fff" strokeWidth="2"><rect x="2" y="12" width="22" height="22" rx="3" /><rect x="24" y="18" width="5" height="10" /><path d="M15 1l-7 14h8l-6 16" /></svg>
      <div className="ml-auto text-right text-[28.5px] leading-[37px] shrink-0">
        <div>上午 10:12</div>
        <div>2022/12/20</div>
      </div>
      <div className="ml-[23px] mr-[45px] w-[50px] h-[40px] rounded-full bg-[#4cc2ff] text-black text-[24px] flex items-center justify-center shrink-0">22</div>
    </div>
  );
}

export default function App() {
  return (
    <div className="w-[3840px] h-[2400px] flex flex-col overflow-hidden bg-[#2b2b2b]">
      <TitleBar />
      <VMToolbar />
      <div className="h-[2083px] shrink-0 flex min-h-0">
        <Library />
        <Main />
      </div>
      <VmStatus />
      <Taskbar />
    </div>
  );
}
